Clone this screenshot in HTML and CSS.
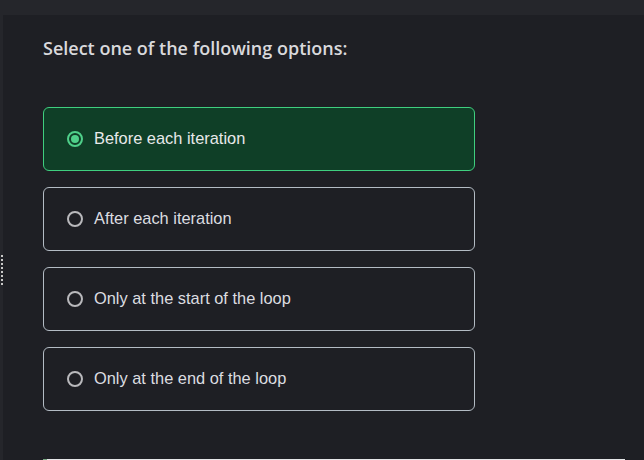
FILE: index.html
```html
<!DOCTYPE html>
<html>
<head>
<meta charset="utf-8">
<link rel="stylesheet" href="styles.css">
</head>
<body>
<div class="topbar"></div>
<div class="layout">
  <div class="strip"><div class="handle"></div></div>
  <main class="panel">
    <h2 class="title">Select one of the following options:</h2>
    <div class="options">
      <label class="option selected"><span class="radio"></span><span class="label">Before each iteration</span></label>
      <label class="option"><span class="radio"></span><span class="label">After each iteration</span></label>
      <label class="option"><span class="radio"></span><span class="label">Only at the start of the loop</span></label>
      <label class="option"><span class="radio"></span><span class="label">Only at the end of the loop</span></label>
    </div>
    <div class="next-card"></div>
  </main>
</div>
</body>
</html>
```
FILE: styles.css
```css
html, body {
  margin: 0;
  padding: 0;
  height: 100%;
  overflow: hidden;
}
body {
  background: #25262b;
  display: flex;
  flex-direction: column;
}
.topbar {
  height: 15px;
  flex: none;
  background: #25262b;
}
.layout {
  flex: 1;
  display: flex;
  min-height: 0;
}
.strip {
  width: 3px;
  flex: none;
  background: #25262b;
  display: flex;
  justify-content: center;
}
.handle {
  width: 2px;
  height: 32px;
  margin-top: 240px;
  background: repeating-linear-gradient(to bottom, #c8c8c8 0 2px, transparent 2px 4px);
}
.panel {
  flex: 1;
  background: #1e1f24;
  padding: 21px 0 0 40px;
  display: flex;
  flex-direction: column;
}
.title {
  margin: 0;
  font-family: "Open Sans", sans-serif;
  font-weight: 600;
  font-size: 18px;
  line-height: 24px;
  color: #d9d9dc;
}
.options {
  margin-top: 47px;
  display: flex;
  flex-direction: column;
  gap: 16px;
  width: 432px;
}
.option {
  box-sizing: border-box;
  height: 64px;
  border: 1px solid #b3bcc4;
  border-radius: 6px;
  display: flex;
  align-items: center;
  padding-left: 23px;
  gap: 11px;
  font-family: "Liberation Sans", Arial, sans-serif;
  font-size: 16.4px;
  color: #dcdde0;
}
.label {
  line-height: 20px;
  padding-bottom: 2px;
}
.option.selected {
  background: #0f3f27;
  border-color: #3fcf7f;
  color: #e8e9ea;
}
.radio {
  box-sizing: border-box;
  width: 16px;
  height: 16px;
  border: 2px solid #b9b9bc;
  border-radius: 50%;
  flex: none;
  display: flex;
  align-items: center;
  justify-content: center;
}
.selected .radio {
  border-color: #4fd08a;
}
.selected .radio::after {
  content: "";
  width: 8px;
  height: 8px;
  border-radius: 50%;
  background: #4fd08a;
}
.next-card {
  margin-top: 48px;
  width: 582px;
  height: 40px;
  background: #e6e7e9;
  border-left: 4px solid #7aa884;
  box-sizing: border-box;
}
```
